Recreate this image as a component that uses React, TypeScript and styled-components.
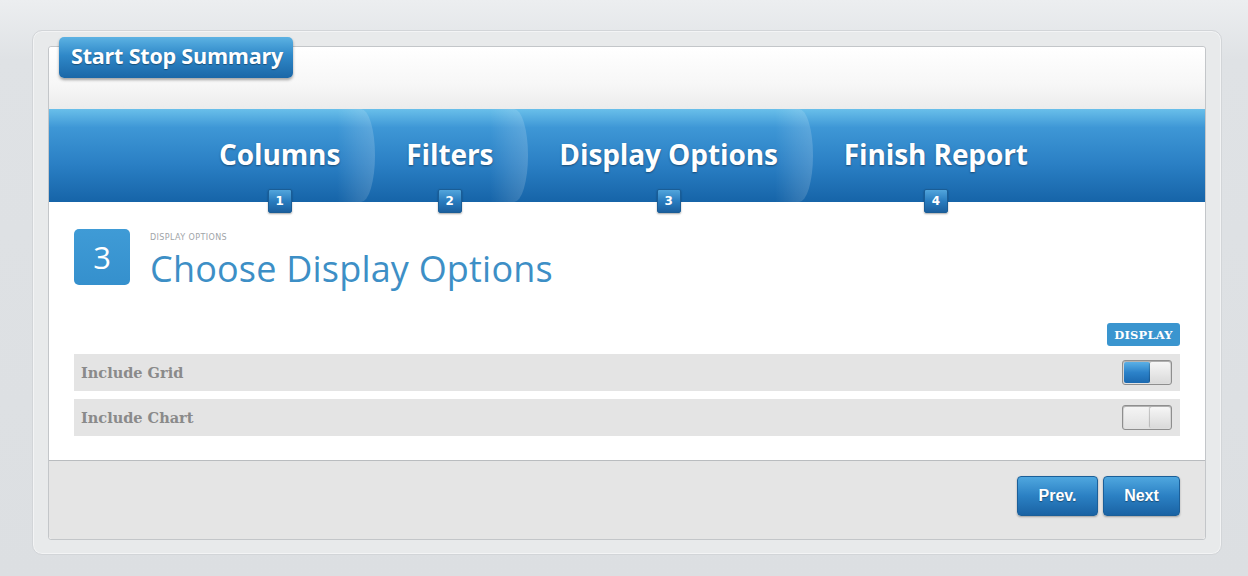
import styled, { createGlobalStyle } from "styled-components";

const GlobalStyle = createGlobalStyle`
  html, body {
    margin: 0;
    padding: 0;
  }
  body {
    width: 1248px;
    height: 576px;
    overflow: hidden;
    background: linear-gradient(180deg, #eceef0 0px, #dfe2e5 60px, #dcdfe2 100%);
    font-family: "Open Sans", "DejaVu Sans", sans-serif;
  }
`;

const Frame = styled.div`
  box-sizing: border-box;
  width: 1190px;
  height: 525px;
  margin: 30px 0 0 32px;
  padding: 15px 15px 14px 15px;
  background: #e8eaeb;
  border: 1px solid #d2d5d8;
  border-radius: 10px;
  box-shadow: inset 0 0 0 1px #f3f4f5;
`;

const Panel = styled.div`
  box-sizing: border-box;
  height: 100%;
  display: flex;
  flex-direction: column;
  border: 1px solid #c3c6c9;
  border-radius: 3px;
  background: #fff;
`;

const Header = styled.div`
  height: 62px;
  padding-left: 10px;
  background: linear-gradient(180deg, #ffffff 0%, #f7f7f7 60%, #ececec 100%);
  border-radius: 3px 3px 0 0;
`;

const TitleTab = styled.div`
  display: inline-flex;
  align-items: center;
  height: 41px;
  margin-top: -10px;
  padding: 0 10px 4px 12px;
  box-sizing: border-box;
  border-radius: 5px;
  background: linear-gradient(180deg, #5cb2e3 0%, #2f88c8 45%, #1b67a7 100%);
  box-shadow: 0 2px 3px rgba(0, 0, 0, 0.35);
  color: #fff;
  font-weight: 700;
  font-size: 21.5px;
  letter-spacing: -0.2px;
  text-shadow: 0 1px 1px rgba(0, 0, 0, 0.35);
`;

const StepBar = styled.div`
  display: flex;
  height: 93px;
  box-sizing: border-box;
  padding-top: 27px;
  background: linear-gradient(180deg, #69bfea 0%, #3e97d6 20%, #2a7fc4 60%, #1664a8 100%);
  position: relative;
  z-index: 1;
`;

const Step = styled.div<{ $first?: boolean; $edge?: boolean }>`
  position: relative;
  display: flex;
  flex-direction: column;
  align-items: center;
  padding: 0 31px 0 ${(p) => (p.$first ? "170px" : "35px")};

  &::after {
    content: "";
    display: ${(p) => (p.$edge ? "block" : "none")};
    position: absolute;
    top: -27px;
    bottom: 0;
    right: -4px;
    width: 38px;
    border-radius: 0 14px 14px 0 / 0 50% 50% 0;
    background: linear-gradient(90deg, rgba(255, 255, 255, 0) 0%, rgba(255, 255, 255, 0.1) 55%, rgba(255, 255, 255, 0.17) 100%);
    pointer-events: none;
  }
`;

const StepLabel = styled.div`
  position: relative;
  z-index: 2;
  height: 36px;
  line-height: 36px;
  color: #fff;
  font-weight: 700;
  font-size: 28px;
  letter-spacing: -0.1px;
  white-space: nowrap;
  text-shadow: 0 1px 2px rgba(0, 0, 0, 0.4);
`;

const StepNumber = styled.div`
  position: relative;
  z-index: 2;
  box-sizing: border-box;
  width: 24px;
  height: 24px;
  margin-top: 17px;
  margin-bottom: -11px;
  display: flex;
  align-items: center;
  justify-content: center;
  border: 1px solid #1a5d96;
  border-radius: 2px;
  background: linear-gradient(180deg, #52a5dc 0%, #2a7dc0 50%, #1a5f9e 100%);
  box-shadow: 0 1px 2px rgba(0, 0, 0, 0.35);
  color: #fff;
  font-family: "DejaVu Sans", sans-serif;
  font-weight: 700;
  font-size: 12px;
`;

const Content = styled.div`
  flex: 1;
  padding: 27px 25px 0 25px;
  background: #fff;
`;

const TitleRow = styled.div`
  display: flex;
  align-items: flex-start;
  gap: 20px;
`;

const StepBox = styled.div`
  width: 56px;
  height: 56px;
  display: flex;
  align-items: center;
  justify-content: center;
  border-radius: 5px;
  background: linear-gradient(180deg, #3f9bd6 0%, #3590cd 100%);
  color: #fff;
  font-size: 31px;
  font-weight: 400;
`;

const TitleText = styled.div`
  display: flex;
  flex-direction: column;
`;

const Eyebrow = styled.div`
  margin-top: 4px;
  height: 10px;
  line-height: 10px;
  font-family: "DejaVu Sans", sans-serif;
  font-size: 8px;
  letter-spacing: 0.4px;
  color: #a0a4a8;
  text-transform: uppercase;
`;

const Heading = styled.h1`
  margin: 6px 0 0 0;
  font-weight: 400;
  font-size: 36px;
  line-height: 40px;
  letter-spacing: 0.2px;
  color: #3d8fc6;
`;

const OptionsHead = styled.div`
  display: flex;
  justify-content: flex-end;
  margin-top: 34px;
  margin-bottom: 8px;
`;

const ColumnTag = styled.div`
  width: 73px;
  height: 23px;
  display: flex;
  align-items: center;
  justify-content: center;
  border-radius: 3px;
  background: #3a95cf;
  color: #fff;
  font-family: "DejaVu Serif", serif;
  font-weight: 700;
  font-size: 11.5px;
  letter-spacing: 0.2px;
`;

const OptionList = styled.div`
  display: flex;
  flex-direction: column;
  gap: 8px;
`;

const OptionRow = styled.div`
  height: 37px;
  display: flex;
  align-items: center;
  justify-content: space-between;
  padding: 0 8px 0 7px;
  background: #e4e4e4;
`;

const OptionLabel = styled.span`
  font-family: "DejaVu Serif", serif;
  font-weight: 700;
  font-size: 14.5px;
  color: #8a8a8a;
`;

const Toggle = styled.div`
  box-sizing: border-box;
  width: 50px;
  height: 25px;
  display: flex;
  padding: 1px;
  border: 1px solid #8e8e8e;
  border-radius: 3px;
  background: #e6e6e6;
  box-shadow: inset 0 1px 2px rgba(0, 0, 0, 0.3);
`;

const ToggleTrack = styled.div<{ $on?: boolean }>`
  width: 26px;
  border-radius: 2px;
  background: ${(p) =>
    p.$on
      ? "linear-gradient(180deg, #5bb0e6 0%, #2c82c9 50%, #1b69b0 100%)"
      : "linear-gradient(180deg, #f4f4f4 0%, #e2e2e2 100%)"};
`;

const ToggleKnob = styled.div`
  flex: 1;
  border-radius: 2px;
  background: linear-gradient(180deg, #f6f6f6 0%, #dadada 100%);
  box-shadow: -1px 0 1px rgba(0, 0, 0, 0.2);
`;

const Footer = styled.div`
  height: 79px;
  display: flex;
  justify-content: flex-end;
  align-items: flex-start;
  gap: 5px;
  box-sizing: border-box;
  padding: 15px 25px 0 0;
  background: #e5e5e5;
  border-top: 1px solid #b9bcbf;
  border-radius: 0 0 3px 3px;
`;

const NavButton = styled.button<{ $width: number }>`
  width: ${(p) => p.$width}px;
  height: 40px;
  border: 1px solid #1b5f99;
  border-radius: 4px;
  background: linear-gradient(180deg, #4fa7df 0%, #2b80c3 50%, #1a63a4 100%);
  box-shadow: 0 1px 2px rgba(0, 0, 0, 0.3);
  color: #fff;
  font-family: "Liberation Sans", Arial, sans-serif;
  font-weight: 700;
  font-size: 16px;
  text-shadow: 0 1px 1px rgba(0, 0, 0, 0.35);
  cursor: pointer;
`;

const steps = [
  { label: "Columns", n: 1 },
  { label: "Filters", n: 2 },
  { label: "Display Options", n: 3 },
  { label: "Finish Report", n: 4 },
];

const options = [
  { label: "Include Grid", on: true },
  { label: "Include Chart", on: false },
];

const App = () => {
  return (
    <>
      <GlobalStyle />
      <Frame>
        <Panel>
          <Header>
            <TitleTab>Start Stop Summary</TitleTab>
          </Header>
          <StepBar>
            {steps.map((s, i) => (
              <Step key={s.n} $first={i === 0} $edge={i < steps.length - 1}>
                <StepLabel>{s.label}</StepLabel>
                <StepNumber>{s.n}</StepNumber>
              </Step>
            ))}
          </StepBar>
          <Content>
            <TitleRow>
              <StepBox>3</StepBox>
              <TitleText>
                <Eyebrow>Display Options</Eyebrow>
                <Heading>Choose Display Options</Heading>
              </TitleText>
            </TitleRow>
            <OptionsHead>
              <ColumnTag>DISPLAY</ColumnTag>
            </OptionsHead>
            <OptionList>
              {options.map((o) => (
                <OptionRow key={o.label}>
                  <OptionLabel>{o.label}</OptionLabel>
                  <Toggle>
                    <ToggleTrack $on={o.on} />
                    <ToggleKnob />
                  </Toggle>
                </OptionRow>
              ))}
            </OptionList>
          </Content>
          <Footer>
            <NavButton $width={81}>Prev.</NavButton>
            <NavButton $width={77}>Next</NavButton>
          </Footer>
        </Panel>
      </Frame>
    </>
  );
};

export default App;
